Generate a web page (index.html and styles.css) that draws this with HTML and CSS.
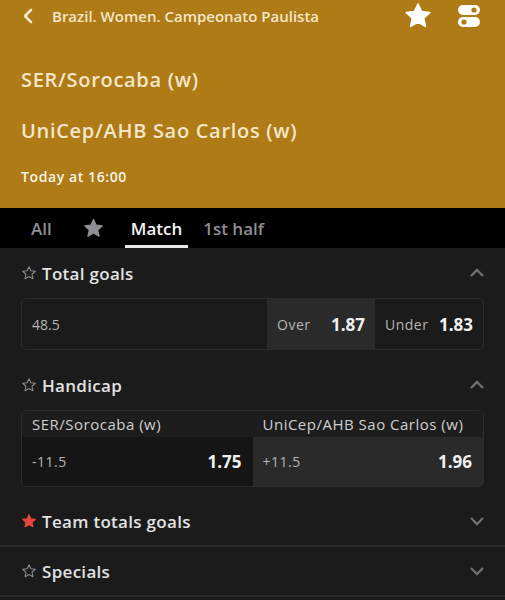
FILE: index.html
```html
<!DOCTYPE html>
<html>
<head>
    <link rel="stylesheet" href="styles.css">
</head>
<body>
    <div class="header">
        <div class="top-bar">
            <svg class="back" width="12" height="16" viewBox="0 0 12 16"><path d="M9 2 L3 8 L9 14" fill="none" stroke="#f5e6c8" stroke-width="2.6" stroke-linecap="round" stroke-linejoin="round"/></svg>
            <div class="league">Brazil. Women. Campeonato Paulista</div>
            <svg class="fav" width="28" height="28" viewBox="0 0 24 24"><path d="M12 1.8 L15 8.3 L22 9 L16.8 13.8 L18.3 20.8 L12 17.2 L5.7 20.8 L7.2 13.8 L2 9 L9 8.3 Z" fill="#fff" stroke="#fff" stroke-width="1.5" stroke-linejoin="round"/></svg>
            <svg class="toggles" width="24" height="24" viewBox="0 0 24 24">
                <rect x="1" y="1" width="22" height="10" rx="5" fill="#fff"/>
                <circle cx="17" cy="6" r="2.6" fill="#ae7b17"/>
                <rect x="1" y="13" width="22" height="10" rx="5" fill="#fff"/>
                <circle cx="7" cy="18" r="2.6" fill="#ae7b17"/>
            </svg>
        </div>
        <div class="team home">SER/Sorocaba (w)</div>
        <div class="team away">UniCep/AHB Sao Carlos (w)</div>
        <div class="time">Today at 16:00</div>
    </div>

    <div class="tabs">
        <div class="tab all">All</div>
        <div class="tab fav-tab">
            <svg width="21" height="21" viewBox="0 0 24 24"><path d="M12 1.8 L15 8.3 L22 9 L16.8 13.8 L18.3 20.8 L12 17.2 L5.7 20.8 L7.2 13.8 L2 9 L9 8.3 Z" fill="#8e8e93" stroke="#8e8e93" stroke-width="1.5" stroke-linejoin="round"/></svg>
        </div>
        <div class="tab active">Match</div>
        <div class="tab">1st half</div>
    </div>

    <div class="markets">
        <div class="market">
            <div class="market-head">
                <svg class="star" width="16" height="16" viewBox="0 0 24 24"><path d="M12 2.5 L14.8 8.7 L21.5 9.4 L16.5 13.9 L17.9 20.6 L12 17.2 L6.1 20.6 L7.5 13.9 L2.5 9.4 L9.2 8.7 Z" fill="none" stroke="#8a8a8a" stroke-width="1.6" stroke-linejoin="round"/></svg>
                <div class="market-title">Total goals</div>
                <svg class="chevron" width="16" height="10" viewBox="0 0 16 10"><path d="M2 8 L8 2 L14 8" fill="none" stroke="#6f6f6f" stroke-width="2.4"/></svg>
            </div>
            <div class="box">
                <div class="row">
                    <div class="cell line">48.5</div>
                    <div class="cell odd light"><span class="label">Over</span><span class="price">1.87</span></div>
                    <div class="cell odd"><span class="label">Under</span><span class="price">1.83</span></div>
                </div>
            </div>
        </div>

        <div class="market">
            <div class="market-head">
                <svg class="star" width="16" height="16" viewBox="0 0 24 24"><path d="M12 2.5 L14.8 8.7 L21.5 9.4 L16.5 13.9 L17.9 20.6 L12 17.2 L6.1 20.6 L7.5 13.9 L2.5 9.4 L9.2 8.7 Z" fill="none" stroke="#8a8a8a" stroke-width="1.6" stroke-linejoin="round"/></svg>
                <div class="market-title">Handicap</div>
                <svg class="chevron" width="16" height="10" viewBox="0 0 16 10"><path d="M2 8 L8 2 L14 8" fill="none" stroke="#6f6f6f" stroke-width="2.4"/></svg>
            </div>
            <div class="box">
                <div class="names">
                    <div class="name">SER/Sorocaba (w)</div>
                    <div class="name">UniCep/AHB Sao Carlos (w)</div>
                </div>
                <div class="hcp-row">
                    <div class="hcp"><span class="label">-11.5</span><span class="price">1.75</span></div>
                    <div class="hcp light"><span class="label">+11.5</span><span class="price">1.96</span></div>
                </div>
            </div>
        </div>

        <div class="market closed">
            <div class="market-head">
                <svg class="star" width="16" height="16" viewBox="0 0 24 24"><path d="M12 2.5 L14.8 8.7 L21.5 9.4 L16.5 13.9 L17.9 20.6 L12 17.2 L6.1 20.6 L7.5 13.9 L2.5 9.4 L9.2 8.7 Z" fill="#e8453c" stroke="#e8453c" stroke-width="1.6" stroke-linejoin="round"/></svg>
                <div class="market-title">Team totals goals</div>
                <svg class="chevron" width="16" height="10" viewBox="0 0 16 10"><path d="M2 2 L8 8 L14 2" fill="none" stroke="#6f6f6f" stroke-width="2.4"/></svg>
            </div>
        </div>

        <div class="market closed">
            <div class="market-head">
                <svg class="star" width="16" height="16" viewBox="0 0 24 24"><path d="M12 2.5 L14.8 8.7 L21.5 9.4 L16.5 13.9 L17.9 20.6 L12 17.2 L6.1 20.6 L7.5 13.9 L2.5 9.4 L9.2 8.7 Z" fill="none" stroke="#8a8a8a" stroke-width="1.6" stroke-linejoin="round"/></svg>
                <div class="market-title">Specials</div>
                <svg class="chevron" width="16" height="10" viewBox="0 0 16 10"><path d="M2 2 L8 8 L14 2" fill="none" stroke="#6f6f6f" stroke-width="2.4"/></svg>
            </div>
        </div>
    </div>
</body>
</html>
```

FILE: styles.css
```css
body {
    margin: 0;
    height: 600px;
    overflow: hidden;
    background: #1b1b1b;
    font-family: 'Open Sans', 'Lato', sans-serif;
    color: #e2e2e2;
}

.header {
    height: 208px;
    background: #ae7b17;
    box-sizing: border-box;
    padding: 0 21px;
}

.top-bar {
    display: flex;
    align-items: center;
    height: 32px;
}

.back {
    margin-left: 1px;
    margin-right: 18px;
}

.league {
    flex: 1;
    font-size: 15px;
    font-weight: 600;
    color: #f5e6c8;
}

.fav {
    margin-right: 25px;
}

.toggles {
    margin-right: 3px;
}

.team {
    font-size: 20px;
    font-weight: 600;
    color: #f5e6c8;
    line-height: 26px;
    letter-spacing: 0.7px;
}

.team.home {
    margin-top: 35px;
}

.team.away {
    margin-top: 25px;
}

.time {
    margin-top: 23px;
    font-size: 14px;
    font-weight: 600;
    line-height: 19px;
    letter-spacing: 0.6px;
    color: #fbf4e6;
}

.tabs {
    display: flex;
    align-items: stretch;
    height: 40px;
    background: #000;
    padding-left: 31px;
}

.tab {
    display: flex;
    align-items: center;
    font-size: 17px;
    font-weight: 600;
    color: #8e8e93;
    box-sizing: border-box;
    border-bottom: 3px solid transparent;
    padding-top: 3px;
}

.tab.all {
    margin-right: 31px;
}

.tab.fav-tab {
    margin-right: 21px;
}

.tab.active {
    color: #f2f2f2;
    padding-left: 6px;
    padding-right: 6px;
    margin-right: 15px;
    border-bottom-color: #e8e8e8;
}

.markets {
    padding: 0 21px;
}

.market-head {
    display: flex;
    align-items: center;
    height: 50px;
}

.star {
    margin-right: 5px;
}

.market-title {
    flex: 1;
    font-size: 17px;
    font-weight: 600;
    letter-spacing: 0.3px;
    color: #e2e2e2;
}

.chevron {
    margin-right: -1px;
}

.box {
    border: 1px solid #2c2c2c;
    border-radius: 5px;
    overflow: hidden;
    margin-bottom: 10px;
}

.row {
    display: flex;
    height: 50px;
}

.cell {
    display: flex;
    align-items: center;
    padding: 0 10px;
    font-size: 14px;
    color: #b5b5b5;
}

.cell.line {
    flex: 1;
}

.cell.odd {
    width: 108px;
    box-sizing: border-box;
    justify-content: space-between;
}

.light {
    background: #2a2a2a;
}

.label {
    font-size: 14px;
    letter-spacing: 0.5px;
    color: #b5b5b5;
}

.price {
    font-size: 17px;
    font-weight: 700;
    color: #f0f0f0;
}

.names {
    display: flex;
    height: 26px;
    align-items: center;
    background: #1d1d1d;
}

.name {
    flex: 1;
    padding-left: 10px;
    font-size: 15px;
    letter-spacing: 0.5px;
    color: #cfcfcf;
}

.hcp-row {
    display: flex;
    height: 49px;
}

.hcp {
    flex: 1;
    display: flex;
    align-items: center;
    justify-content: space-between;
    padding: 0 11px 0 10px;
    background: #151515;
}

.hcp.light {
    background: #2a2a2a;
}

.closed {
    border-bottom: 2px solid #2a2a2a;
    margin: 0 -21px;
    padding: 0 21px;
}

.closed .market-head {
    height: 48px;
}
```
